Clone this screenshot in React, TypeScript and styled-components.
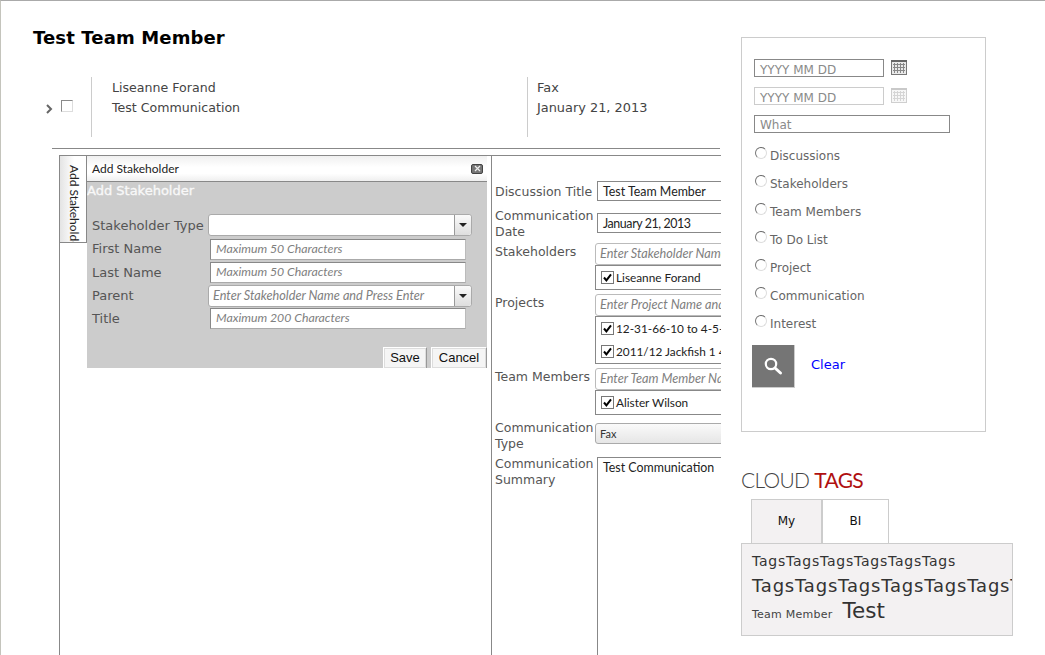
import { FC, ReactNode } from 'react';
import styled, { createGlobalStyle } from 'styled-components';

const GlobalStyle = createGlobalStyle`
  html, body {
    margin: 0;
    height: 655px;
    overflow: hidden;
    background: #ffffff;
    font-family: "DejaVu Sans", Verdana, sans-serif;
  }
`;

const CheckIcon: FC = () => (
  <svg width="13" height="13" viewBox="0 0 13 13">
    <rect x="0.5" y="0.5" width="12" height="12" fill="#fff" stroke="#777" />
    <path d="M3 6.5 L5.4 9.4 L10 3.4" fill="none" stroke="#000" strokeWidth="2" />
  </svg>
);

const CalendarIcon: FC<{ faded?: boolean }> = ({ faded }) => (
  <CalendarSvg width="16" height="15" viewBox="0 0 16 15" opacity={faded ? 0.35 : 1}>
    <rect x="0.5" y="0.5" width="15" height="14" fill="#e9e9e9" stroke="#777" />
    <rect x="0" y="0" width="16" height="2" fill="#666" />
    <path d="M3.5 3v10M6.5 3v10M9.5 3v10M12.5 3v10M2 4.5h12M2 7.5h12M2 10.5h12" stroke="#888" strokeWidth="1" />
  </CalendarSvg>
);

const Combo: FC<{ placeholder?: string }> = ({ placeholder }) => (
  <ComboWrap>
    <ComboText>{placeholder}</ComboText>
    <ComboButton>
      <ComboArrow />
    </ComboButton>
  </ComboWrap>
);

const FormRow: FC<{ label: ReactNode; height: number; labelTop?: number; children: ReactNode }> = ({
  label,
  height,
  labelTop = 0,
  children,
}) => (
  <DetailRow $height={height}>
    <DetailLabel $top={labelTop}>{label}</DetailLabel>
    <DetailControl>{children}</DetailControl>
  </DetailRow>
);

const filters = ['Discussions', 'Stakeholders', 'Team Members', 'To Do List', 'Project', 'Communication', 'Interest'];

export default function App() {
  return (
    <Page>
      <GlobalStyle />
      <Main>
        <Heading>Test Team Member</Heading>
        <ResultRow>
          <SelectCell>
            <Chevron viewBox="0 0 7 10" width="7" height="10">
              <path d="M1 1 L5 5 L1 9" fill="none" stroke="#666" strokeWidth="2" />
            </Chevron>
            <EmptyCheck />
          </SelectCell>
          <NameCell>
            <span>Liseanne Forand</span>
            <span>Test Communication</span>
          </NameCell>
          <TypeCell>
            <span>Fax</span>
            <span>January 21, 2013</span>
          </TypeCell>
        </ResultRow>
        <Rule />
        <Detail>
          <VerticalTabColumn>
            <VerticalTab>
              <VerticalLabel>Add Stakeholder</VerticalLabel>
            </VerticalTab>
          </VerticalTabColumn>
          <DialogColumn>
            <Dialog>
              <DialogHeader>
                <span>Add Stakeholder</span>
                <CloseBox>
                  <svg width="7" height="7" viewBox="0 0 7 7">
                    <path d="M1 1 L6 6 M6 1 L1 6" stroke="#eee" strokeWidth="1.2" />
                  </svg>
                </CloseBox>
              </DialogHeader>
              <DialogBody>
                <DialogTitle>Add Stakeholder</DialogTitle>
                <DialogForm>
                  <DialogRow $height={24}>
                    <DialogLabel>Stakeholder Type</DialogLabel>
                    <Combo />
                  </DialogRow>
                  <DialogRow $height={24}>
                    <DialogLabel>First Name</DialogLabel>
                    <DialogInput>Maximum 50 Characters</DialogInput>
                  </DialogRow>
                  <DialogRow $height={23}>
                    <DialogLabel>Last Name</DialogLabel>
                    <DialogInput>Maximum 50 Characters</DialogInput>
                  </DialogRow>
                  <DialogRow $height={23}>
                    <DialogLabel>Parent</DialogLabel>
                    <Combo placeholder="Enter Stakeholder Name and Press Enter" />
                  </DialogRow>
                  <DialogRow $height={23}>
                    <DialogLabel>Title</DialogLabel>
                    <DialogInput>Maximum 200 Characters</DialogInput>
                  </DialogRow>
                </DialogForm>
                <DialogActions>
                  <ActionButton $width={44}>Save</ActionButton>
                  <ActionButton $width={56}>Cancel</ActionButton>
                </DialogActions>
              </DialogBody>
            </Dialog>
          </DialogColumn>
          <DetailForm>
            <FormRow label="Discussion Title" height={32} labelTop={3}>
              <ValueBox>Test Team Member</ValueBox>
            </FormRow>
            <FormRow label={<>Communication<br />Date</>} height={30} labelTop={-5}>
              <ValueBox $tight>January 21, 2013</ValueBox>
            </FormRow>
            <FormRow label="Stakeholders" height={51} labelTop={1}>
              <SearchBox>Enter Stakeholder Name and Press Enter</SearchBox>
              <PickedList>
                <PickedItem><CheckIcon />Liseanne Forand</PickedItem>
              </PickedList>
            </FormRow>
            <FormRow label="Projects" height={74} labelTop={1}>
              <SearchBox>Enter Project Name  and Press Enter</SearchBox>
              <PickedList>
                <PickedItem><CheckIcon />12-31-66-10 to 4-5-66-10</PickedItem>
                <PickedItem><CheckIcon />2011/12 Jackfish 1 4D Seismic</PickedItem>
              </PickedList>
            </FormRow>
            <FormRow label="Team Members" height={55} labelTop={1}>
              <SearchBox>Enter Team Member Name and Press Enter</SearchBox>
              <PickedList>
                <PickedItem><CheckIcon />Alister Wilson</PickedItem>
              </PickedList>
            </FormRow>
            <FormRow label={<>Communication<br />Type</>} height={34} labelTop={-3}>
              <SelectBox>Fax</SelectBox>
            </FormRow>
            <FormRow label={<>Communication<br />Summary</>} height={200} labelTop={-1}>
              <SummaryBox>Test Communication</SummaryBox>
            </FormRow>
          </DetailForm>
        </Detail>
      </Main>
      <Sidebar>
        <FilterBox>
          <DateRow>
            <FilterInput $width={130} $line={20}>YYYY MM DD</FilterInput>
            <CalendarIcon />
          </DateRow>
          <DateRow>
            <FilterInput $width={130} $line={20} $faded>YYYY MM DD</FilterInput>
            <CalendarIcon faded />
          </DateRow>
          <FilterInput $width={196} $line={18}>What</FilterInput>
          <RadioList>
            {filters.map((name) => (
              <RadioRow key={name}>
                <Radio />
                <RadioText>{name}</RadioText>
              </RadioRow>
            ))}
          </RadioList>
          <SearchRow>
            <SearchButton>
              <svg width="20" height="20" viewBox="0 0 20 20">
                <circle cx="8" cy="8" r="5.2" fill="none" stroke="#fff" strokeWidth="2.2" />
                <path d="M12 12 L17.5 17" stroke="#fff" strokeWidth="3" strokeLinecap="round" />
              </svg>
            </SearchButton>
            <ClearLink>Clear</ClearLink>
          </SearchRow>
        </FilterBox>
        <CloudTitle>CLOUD <em>TAGS</em></CloudTitle>
        <CloudTabs>
          <CloudTab $active $width={71}>My</CloudTab>
          <CloudTab $width={67}>BI</CloudTab>
        </CloudTabs>
        <CloudBox>
          <CloudLine $size={14} $height={24} $spacing={0.75}>TagsTagsTagsTagsTagsTags</CloudLine>
          <CloudLine $size={18} $height={25} $spacing={0.8}>TagsTagsTagsTagsTagsTagsTagsTags</CloudLine>
          <CloudBottom>
            <CloudSmall>Team Member</CloudSmall>
            <CloudBig>Test</CloudBig>
          </CloudBottom>
        </CloudBox>
      </Sidebar>
    </Page>
  );
}

const Page = styled.div`
  display: flex;
  align-items: flex-start;
  height: 654px;
  overflow: hidden;
  border-top: 1px solid #aaaaaa;
  border-left: 1px solid #c4c4bc;
`;

const Main = styled.div`
  width: 720px;
  flex: none;
  box-sizing: border-box;
  height: 654px;
  overflow: hidden;
  color: #333;
`;

const Heading = styled.h1`
  margin: 26px 0 0 32px;
  height: 50px;
  font-size: 18px;
  line-height: 21px;
  letter-spacing: 0.13px;
  font-weight: bold;
  color: #000;
`;

const ResultRow = styled.div`
  display: grid;
  grid-template-columns: 46px 436px 1fr;
  height: 60px;
  margin-left: 45px;
  line-height: 20px;
  color: #444;
`;

const SelectCell = styled.div`
  display: flex;
  align-items: center;
  gap: 8px;
  padding-top: 1px;
  border-right: 1px solid #cccccc;
  box-sizing: border-box;
  height: 60px;
`;

const Chevron = styled.svg`
  flex: none;
  margin-top: 2px;
`;

const EmptyCheck = styled.span`
  width: 10px;
  height: 10px;
  border: 1px solid #8a8a8a;
  border-right-color: #ddd;
  border-bottom-color: #ddd;
  margin-top: -4px;
`;

const NameCell = styled.div`
  display: flex;
  flex-direction: column;
  padding: 1px 0 0 20px;
  font-size: 12.6px;
  border-right: 1px solid #cccccc;
`;

const TypeCell = styled.div`
  display: flex;
  flex-direction: column;
  padding: 1px 0 0 9px;
  font-size: 12.9px;
`;

const Rule = styled.div`
  height: 1px;
  margin: 11px 1px 6px 51px;
  background: #888;
`;

const Detail = styled.div`
  display: flex;
  height: 500px;
  margin-left: 58px;
  border-top: 1px solid #888;
  border-left: 1px solid #888;
`;

const VerticalTabColumn = styled.div`
  width: 27px;
  flex: none;
`;

const VerticalTab = styled.div`
  width: 27px;
  height: 87px;
  box-sizing: border-box;
  overflow: hidden;
  border-bottom: 1px solid #888;
  border-right: 1px solid #888;
  background: linear-gradient(to right, #e4e4e4, #ffffff 55%);
`;

const VerticalLabel = styled.div`
  writing-mode: vertical-rl;
  white-space: nowrap;
  font-family: "Lato", sans-serif;
  font-size: 12px;
  line-height: 14px;
  margin: 9px 0 0 7px;
  color: #222;
`;

const DialogColumn = styled.div`
  width: 405px;
  flex: none;
  box-sizing: border-box;
  border-right: 1px solid #888;
`;

const Dialog = styled.div`
  width: 400px;
`;

const DialogHeader = styled.div`
  display: flex;
  justify-content: space-between;
  align-items: center;
  height: 26px;
  box-sizing: border-box;
  padding: 0 4px 0 5px;
  border-bottom: 1px solid #888;
  background: linear-gradient(to bottom, #f0f0f0, #ffffff 45%, #ffffff 70%, #efefef);
  font-family: "Lato", sans-serif;
  font-size: 12px;
  color: #222;
`;

const CloseBox = styled.span`
  display: flex;
  align-items: center;
  justify-content: center;
  width: 12px;
  height: 10px;
  border-radius: 2px;
  border: 1px solid #444;
  background: #777;
  box-sizing: border-box;
`;

const DialogBody = styled.div`
  height: 186px;
  background: #cccccc;
  overflow: hidden;
`;

const DialogTitle = styled.div`
  height: 32px;
  padding-top: 1px;
  box-sizing: border-box;
  font-size: 13px;
  line-height: 16px;
  color: #f8f8f8;
  -webkit-text-stroke: 0.35px #f8f8f8;
`;

const DialogForm = styled.div`
  display: flex;
  flex-direction: column;
  padding-left: 5px;
`;

const DialogRow = styled.div<{ $height: number }>`
  display: grid;
  grid-template-columns: 116px 264px;
  align-items: center;
  height: ${(p) => p.$height}px;
  margin-top: -1px;
  margin-bottom: 1px;
  &:first-child > div:first-child {
    padding-top: 1px;
  }
`;

const DialogLabel = styled.div`
  font-size: 13px;
  line-height: 16px;
  color: #555;
  white-space: nowrap;
`;

const inputText = `
  font-family: "Lato", sans-serif;
  font-style: italic;
  font-size: 12.7px;
  color: #808080;
  white-space: nowrap;
  overflow: hidden;
`;

const DialogInput = styled.div`
  ${inputText}
  font-size: 12.3px;
  width: 256px;
  height: 21px;
  margin-left: 2px;
  box-sizing: border-box;
  padding-left: 5px;
  line-height: 18px;
  background: #fff;
  border: 1px solid #888;
  border-bottom-color: #aaa;
  border-right-color: #bbb;
`;

const ComboWrap = styled.div`
  display: flex;
  width: 264px;
  height: 22px;
  box-sizing: border-box;
  border: 1px solid #aaa;
  border-radius: 3px;
  background: #fff;
`;

const ComboText = styled.div`
  ${inputText}
  flex: 1;
  padding-left: 4px;
  line-height: 19px;
`;

const ComboButton = styled.div`
  display: flex;
  align-items: center;
  justify-content: center;
  width: 16px;
  border-left: 1px solid #999;
  background: linear-gradient(to bottom, #fafafa, #dedede);
  border-radius: 0 3px 3px 0;
`;

const ComboArrow = styled.span`
  width: 0;
  height: 0;
  border-left: 4px solid transparent;
  border-right: 4px solid transparent;
  border-top: 4px solid #222;
`;

const DialogActions = styled.div`
  display: flex;
  justify-content: flex-end;
  gap: 4px;
  margin-top: 16px;
`;

const ActionButton = styled.div<{ $width: number }>`
  width: ${(p) => p.$width}px;
  height: 22px;
  box-sizing: border-box;
  text-align: center;
  line-height: 20px;
  font-family: "Liberation Sans", Arial, sans-serif;
  font-size: 13px;
  color: #111;
  background: #f5f5f5;
  border: 1px solid #999;
  border-top-color: #fff;
  border-left-color: #fff;
  box-shadow: 0 0 0 1px #ddd inset;
`;

const DetailForm = styled.div`
  display: flex;
  flex-direction: column;
  flex: 1;
  min-width: 0;
  overflow: hidden;
  padding-top: 25px;
`;

const DetailRow = styled.div<{ $height: number }>`
  display: grid;
  grid-template-columns: 103px 1fr;
  flex: none;
  height: ${(p) => p.$height}px;
`;

const DetailLabel = styled.div<{ $top: number }>`
  margin-top: ${(p) => p.$top}px;
  padding-left: 3px;
  font-size: 12.5px;
  line-height: 16px;
  color: #555;
  white-space: nowrap;
`;

const DetailControl = styled.div`
  min-width: 0;
`;

const ValueBox = styled.div<{ $tight?: boolean }>`
  width: 160px;
  height: 20px;
  margin-left: 2px;
  box-sizing: border-box;
  padding-left: 5px;
  border: 1px solid #888;
  font-family: "Lato", sans-serif;
  font-size: 12.4px;
  letter-spacing: ${(p) => (p.$tight ? '-0.4px' : '0')};
  line-height: 19px;
  color: #222;
  white-space: nowrap;
`;

const SearchBox = styled.div`
  ${inputText}
  width: 160px;
  height: 22px;
  box-sizing: border-box;
  padding-left: 4px;
  line-height: 19px;
  border: 1px solid #bbb;
  border-radius: 3px 0 0 3px;
`;

const PickedList = styled.div`
  display: flex;
  flex-direction: column;
  width: 160px;
  box-sizing: border-box;
  border: 1px solid #888;
`;

const PickedItem = styled.div`
  display: flex;
  align-items: center;
  gap: 2px;
  height: 23px;
  padding-left: 5px;
  font-family: "Lato", sans-serif;
  font-size: 11.8px;
  color: #222;
  white-space: nowrap;
  svg {
    flex: none;
  }
`;

const SelectBox = styled.div`
  width: 160px;
  height: 21px;
  box-sizing: border-box;
  padding-left: 4px;
  line-height: 20px;
  border: 1px solid #aaa;
  border-radius: 3px 0 0 3px;
  background: linear-gradient(to bottom, #fafafa, #e6e6e6);
  font-family: "Lato", sans-serif;
  font-size: 11px;
  color: #333;
`;

const SummaryBox = styled.div`
  width: 160px;
  height: 260px;
  margin: 0 0 0 2px;
  box-sizing: border-box;
  padding: 2px 5px;
  border: 1px solid #888;
  font-family: "Lato", sans-serif;
  font-size: 12.4px;
  line-height: 16px;
  color: #222;
  white-space: nowrap;
`;

const Sidebar = styled.div`
  display: flex;
  flex-direction: column;
  margin: 36px 0 0 20px;
  width: 272px;
`;

const FilterBox = styled.div`
  width: 245px;
  height: 395px;
  box-sizing: border-box;
  padding: 21px 12px 0;
  border: 1px solid #cccccc;
`;

const DateRow = styled.div`
  display: flex;
  align-items: flex-start;
  gap: 7px;
  height: 28px;
`;

const CalendarSvg = styled.svg`
  margin-top: 1px;
`;

const FilterInput = styled.div<{ $width: number; $line: number; $faded?: boolean }>`
  width: ${(p) => p.$width}px;
  height: 18px;
  box-sizing: border-box;
  padding-left: 5px;
  border: 1px solid ${(p) => (p.$faded ? '#cccccc' : '#888888')};
  font-size: 12px;
  line-height: ${(p) => p.$line}px;
  color: #8a8a8a;
  overflow: hidden;
`;

const RadioList = styled.div`
  display: flex;
  flex-direction: column;
  margin-top: 15px;
`;

const RadioRow = styled.div`
  display: flex;
  align-items: flex-start;
  gap: 3px;
  height: 28px;
  padding-left: 1px;
  font-size: 12px;
  line-height: 14px;
  color: #666;
`;

const RadioText = styled.span`
  margin-top: 1px;
`;

const Radio = styled.span`
  width: 10px;
  height: 10px;
  margin-top: -1px;
  border-radius: 50%;
  border: 1px solid #ddd;
  border-top-color: #666;
  border-left-color: #777;
`;

const SearchRow = styled.div`
  display: flex;
  align-items: center;
  gap: 16px;
  margin: 1px 0 0 -2px;
`;

const SearchButton = styled.div`
  display: flex;
  align-items: center;
  justify-content: center;
  width: 43px;
  height: 43px;
  box-sizing: border-box;
  background: #757575;
  border-right: 1px solid #ccc;
  border-bottom: 1px solid #ccc;
`;

const ClearLink = styled.a`
  padding-bottom: 4px;
  font-size: 13px;
  color: #0000ff;
`;

const CloudTitle = styled.div`
  margin-top: 36px;
  height: 31px;
  font-family: "Lato", "Liberation Sans", sans-serif;
  font-weight: 300;
  font-size: 21px;
  line-height: 24px;
  letter-spacing: -0.7px;
  color: #444;
  em {
    font-style: normal;
    font-weight: 400;
    color: #b01010;
  }
`;

const CloudTabs = styled.div`
  display: flex;
  margin-left: 10px;
`;

const CloudTab = styled.div<{ $active?: boolean; $width: number }>`
  width: ${(p) => p.$width}px;
  height: 44px;
  box-sizing: border-box;
  text-align: center;
  line-height: 42px;
  font-size: 12px;
  color: #111;
  border: 1px solid #cccccc;
  border-bottom: none;
  background: ${(p) => (p.$active ? '#f3f1f2' : '#ffffff')};
`;

const CloudBox = styled.div`
  width: 272px;
  height: 93px;
  box-sizing: border-box;
  padding: 5px 0 0 10px;
  overflow: hidden;
  background: #f3f1f2;
  border: 1px solid #cccccc;
  color: #333;
  white-space: nowrap;
`;

const CloudLine = styled.div<{ $size: number; $height: number; $spacing: number }>`
  font-size: ${(p) => p.$size}px;
  line-height: ${(p) => p.$height}px;
  height: ${(p) => p.$height}px;
  letter-spacing: ${(p) => p.$spacing}px;
`;

const CloudBottom = styled.div`
  display: flex;
  align-items: baseline;
  gap: 10px;
`;

const CloudSmall = styled.span`
  font-size: 11px;
  letter-spacing: 0.25px;
  color: #444;
`;

const CloudBig = styled.span`
  font-size: 21.5px;
  color: #333;
`;
